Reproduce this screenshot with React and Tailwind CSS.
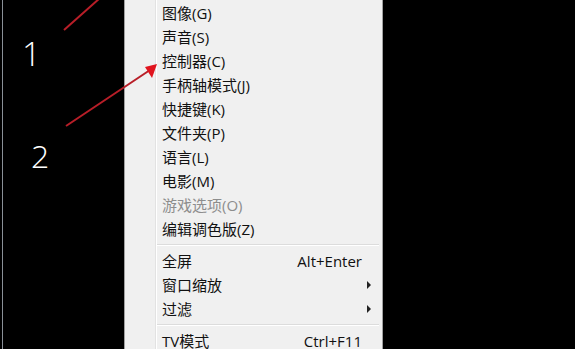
const ITEMS = [
  { label: "图像(G)" },
  { label: "声音(S)" },
  { label: "控制器(C)" },
  { label: "手柄轴模式(J)" },
  { label: "快捷键(K)" },
  { label: "文件夹(P)" },
  { label: "语言(L)" },
  { label: "电影(M)" },
  { label: "游戏选项(O)", disabled: true },
  { label: "编辑调色版(Z)" },
  { sep: true },
  { label: "全屏", shortcut: "Alt+Enter" },
  { label: "窗口缩放", sub: true },
  { label: "过滤", sub: true },
  { sep: true },
  { label: "TV模式", shortcut: "Ctrl+F11" },
];

const FONT = {
  fontFamily: '"Open Sans", "Noto Sans CJK SC", sans-serif',
};

function MenuRow({ label, shortcut, sub, disabled }) {
  return (
    <div
      className={`flex h-[24px] items-center pl-[37px] pr-[20px] text-[15px] leading-none ${
        disabled ? "text-[#8d8d8d]" : "text-[#111]"
      }`}
    >
      <span className="flex-1 whitespace-nowrap">{label}</span>
      {shortcut ? <span className="whitespace-nowrap">{shortcut}</span> : null}
      {sub ? (
        <span className="mr-[-9px] h-0 w-0 border-y-[4px] border-l-[4px] border-y-transparent border-l-[#222]" />
      ) : null}
    </div>
  );
}

function Separator() {
  return (
    <div className="py-[3px] pl-[32px] pr-[3px]">
      <div className="h-px bg-[#dcdcdc]" />
      <div className="h-px bg-white" />
    </div>
  );
}

export default function App() {
  return (
    <div
      className="relative flex h-[349px] w-[575px] overflow-hidden bg-black"
      style={FONT}
    >
      <div className="ml-[2px] w-px bg-[#8a9098]" />
      <div className="w-[121px]" />

      <div className="relative w-[259px] border-l border-r border-[#a0a0a0] bg-[#f0f0f0] pt-[1px]">
        <div className="absolute bottom-0 left-[30px] top-0 flex">
          <div className="w-px bg-[#e2e2e2]" />
          <div className="w-px bg-white" />
        </div>
        <div className="relative">
          {ITEMS.map((it, i) =>
            it.sep ? (
              <Separator key={i} />
            ) : (
              <MenuRow key={i} {...it} />
            )
          )}
        </div>
      </div>

      <div className="pointer-events-none absolute left-[22px] top-[37px] text-[33px] font-light leading-none text-white">
        1
      </div>
      <div className="pointer-events-none absolute left-[31px] top-[140px] text-[32px] font-light leading-none text-white">
        2
      </div>

      <svg
        className="pointer-events-none absolute left-0 top-0"
        width="575"
        height="349"
        viewBox="0 0 575 349"
      >
        <line x1="64" y1="30" x2="100" y2="-2" stroke="#b81e28" strokeWidth="2" />
        <line x1="66" y1="126" x2="150" y2="70" stroke="#b81e28" strokeWidth="2" />
        <polygon points="157,64 145,67 152,78" fill="#e0141e" />
      </svg>
    </div>
  );
}
